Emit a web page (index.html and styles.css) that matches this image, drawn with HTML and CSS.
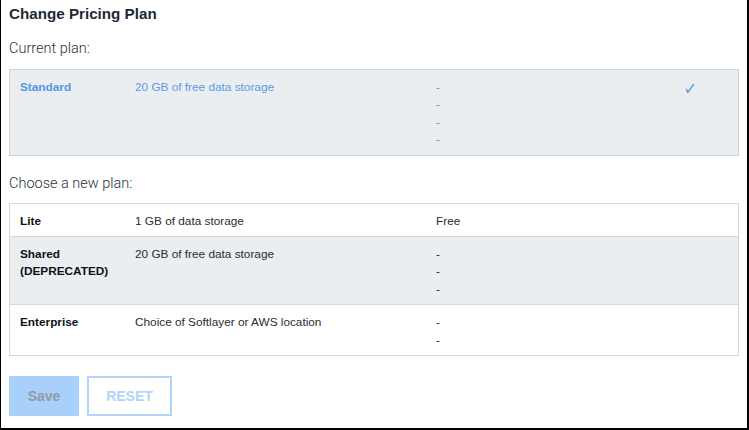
FILE: index.html
```html
<!DOCTYPE html>
<html>
<head>
<meta charset="utf-8">
<link rel="stylesheet" href="styles.css">
</head>
<body>
<div class="frame">
  <h1 class="title">Change Pricing Plan</h1>
  <div class="label label-current">Current plan:</div>
  <div class="plans plans-current">
    <div class="row row-shaded row-current">
      <div class="cell name">Standard</div>
      <div class="cell">20 GB of free data storage</div>
      <div class="cell"><div>-</div><div>-</div><div>-</div><div>-</div></div>
      <div class="cell check"><svg width="10" height="11" viewBox="0 0 10 11"><path d="M1.4 6.4 L2.8 9.4 L8.6 1.4" fill="none" stroke="#5596e6" stroke-width="1.4" stroke-linecap="round" stroke-linejoin="round"/></svg></div>
    </div>
  </div>
  <div class="label label-new">Choose a new plan:</div>
  <div class="plans">
    <div class="row">
      <div class="cell name">Lite</div>
      <div class="cell">1 GB of data storage</div>
      <div class="cell"><div>Free</div></div>
      <div class="cell"></div>
    </div>
    <div class="row row-shaded">
      <div class="cell name">Shared<br>(DEPRECATED)</div>
      <div class="cell">20 GB of free data storage</div>
      <div class="cell"><div>-</div><div>-</div><div>-</div></div>
      <div class="cell"></div>
    </div>
    <div class="row">
      <div class="cell name">Enterprise</div>
      <div class="cell">Choice of Softlayer or AWS location</div>
      <div class="cell"><div>-</div><div>-</div></div>
      <div class="cell"></div>
    </div>
  </div>
  <div class="actions">
    <button class="btn btn-save">Save</button>
    <button class="btn btn-reset">RESET</button>
  </div>
</div>
</body>
</html>
```
FILE: styles.css
```css
* { box-sizing: border-box; }
html, body { margin: 0; padding: 0; background: #fff; }
body { font-family: "Liberation Sans", Arial, sans-serif; }

.frame {
  width: 749px;
  height: 430px;
  border-left: 1px solid #000;
  border-right: 2px solid #000;
  border-bottom: 2px solid #000;
  padding: 0 8px;
  display: flex;
  flex-direction: column;
  overflow: hidden;
}

.title {
  margin: 0;
  font-size: 15.2px;
  font-weight: bold;
  line-height: 26px;
  color: #1d2935;
  padding-top: 1px;
}

.label {
  font-family: Roboto, "Liberation Sans", sans-serif;
  font-weight: 300;
  font-size: 14.5px;
  line-height: 20px;
  color: #27313b;
}
.label-current { margin-top: 12px; margin-bottom: 10px; }
.label-new { margin-top: 18px; margin-bottom: 9px; }

.plans {
  border: 1px solid #d5d8dc;
}
.plans-current { border-color: #d0d4d8; }

.row {
  display: grid;
  grid-template-columns: 115px 301px 249px 1fr;
  padding: 9px 0 6px 0;
  font-size: 11.8px;
  line-height: 17.4px;
  color: #2c2c2c;
  border-top: 1px solid #d5d8dc;
}
.row:first-child { border-top: none; }
.row-shaded { background: #ebeef1; }
.row-current { color: #5a9be6; }
.plans-current .row { padding-top: 9px; padding-bottom: 6px; }

.cell { padding-left: 10px; }
.name { font-weight: bold; color: #111; }
.row-current .name { color: #5596e6; }
.check { padding-left: 10px; padding-top: 4px; }
.check svg { display: block; }

.actions {
  display: flex;
  gap: 8px;
  margin-top: 20px;
}
.btn {
  height: 40px;
  font-family: "Liberation Sans", Arial, sans-serif;
  font-weight: bold;
  font-size: 14px;
  cursor: pointer;
  padding: 0;
}
.btn-save {
  width: 70px;
  background: #a9d0fb;
  border: none;
  color: #8e9ba5;
}
.btn-reset {
  width: 85px;
  background: #fff;
  border: 2px solid #b2d4fb;
  color: #b2d4fb;
}
```
